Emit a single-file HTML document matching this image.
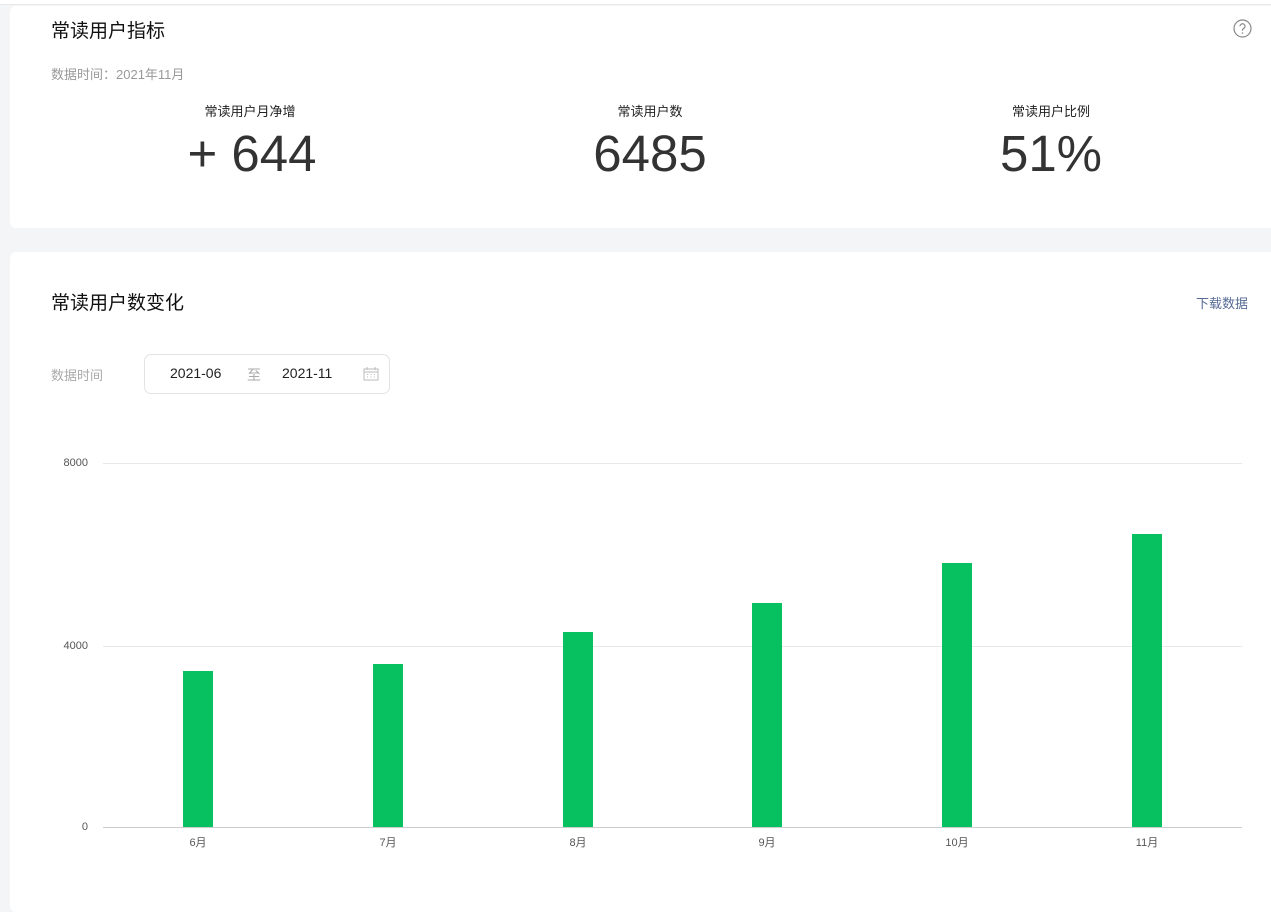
<!DOCTYPE html>
<html><head><meta charset="utf-8"><style>
*{margin:0;padding:0;box-sizing:border-box}
body{width:1271px;height:900px;background:#f4f5f7;font-family:"Liberation Sans","Noto Sans CJK SC",sans-serif;position:relative;overflow:hidden;color:#222}
.top{position:absolute;left:0;top:0;width:1271px;height:5px;background:#fff;border-bottom:1px solid #e8e8e8}
.card{position:absolute;left:10px;width:1280px;background:#fff;border-radius:6px}
.a{position:absolute;white-space:nowrap}
.grid{position:absolute;left:103px;width:1139px;height:1px;background:#e8e8e8}
.bar{position:absolute;width:30px;background:#07c160}
.yl{position:absolute;font-size:11px;color:#555;right:1183px}
.xl{position:absolute;font-size:11px;color:#555;width:60px;text-align:center;top:834px}
</style></head><body>
<div class="top"></div>
<div class="card" style="top:6px;height:222px"></div>
<div class="card" style="top:252px;height:660px"></div>
<div class="a" style="left:51px;top:16px;font-size:19px;color:#111">常读用户指标</div>
<svg class="a" style="left:1233px;top:19px" width="19" height="19" viewBox="0 0 19 19"><circle cx="9.5" cy="9.5" r="8.5" fill="none" stroke="#888" stroke-width="1.2"/><path d="M7 7.3a2.5 2.5 0 1 1 3.4 2.3c-.6.3-.9.7-.9 1.4v.7" fill="none" stroke="#888" stroke-width="1.2"/><circle cx="9.5" cy="14" r=".8" fill="#888"/></svg>
<div class="a" style="left:51px;top:64px;font-size:13px;color:#999">数据时间：2021年11月</div>
<div class="a" style="left:150px;width:200px;text-align:center;top:101px;font-size:13px">常读用户月净增</div>
<div class="a" style="left:152px;width:200px;text-align:center;top:124px;font-size:51px;color:#333">+ 644</div>
<div class="a" style="left:550px;width:200px;text-align:center;top:101px;font-size:13px">常读用户数</div>
<div class="a" style="left:550px;width:200px;text-align:center;top:124px;font-size:51px;color:#333">6485</div>
<div class="a" style="left:951px;width:200px;text-align:center;top:101px;font-size:13px">常读用户比例</div>
<div class="a" style="left:951px;width:200px;text-align:center;top:124px;font-size:51px;color:#333">51%</div>
<div class="a" style="left:51px;top:288px;font-size:19px;color:#111">常读用户数变化</div>
<div class="a" style="left:1196px;top:293px;font-size:13px;color:#576b95">下载数据</div>
<div class="a" style="left:51px;top:365px;font-size:13px;color:#aaa">数据时间</div>
<div class="a" style="left:144px;top:354px;width:246px;height:40px;border:1px solid #e3e3e3;border-radius:7px"></div>
<div class="a" style="left:170px;top:365px;font-size:14px;color:#222">2021-06</div>
<div class="a" style="left:247px;top:365px;font-size:14px;color:#aaa">至</div>
<div class="a" style="left:282px;top:365px;font-size:14px;color:#222">2021-11</div>
<svg class="a" style="left:363px;top:367px" width="16" height="14" viewBox="0 0 16 14"><rect x="1" y="2" width="14" height="11" fill="none" stroke="#bbb"/><path d="M1 5h14M4 0v3M12 0v3" stroke="#bbb"/><path d="M4 7.5h1M7.5 7.5h1M11 7.5h1M4 10h1M7.5 10h1M11 10h1" stroke="#bbb"/></svg>
<div class="grid" style="top:463px"></div>
<div class="grid" style="top:646px"></div>
<div class="grid" style="top:827px;background:#ccc"></div>
<div class="yl" style="top:457px">8000</div>
<div class="yl" style="top:640px">4000</div>
<div class="yl" style="top:821px">0</div>
<div class="bar" style="left:183px;top:671px;height:156px"></div>
<div class="bar" style="left:373px;top:664px;height:163px"></div>
<div class="bar" style="left:563px;top:632px;height:195px"></div>
<div class="bar" style="left:752px;top:603px;height:224px"></div>
<div class="bar" style="left:942px;top:563px;height:264px"></div>
<div class="bar" style="left:1132px;top:534px;height:293px"></div>
<div class="xl" style="left:168px">6月</div>
<div class="xl" style="left:358px">7月</div>
<div class="xl" style="left:548px">8月</div>
<div class="xl" style="left:737px">9月</div>
<div class="xl" style="left:927px">10月</div>
<div class="xl" style="left:1117px">11月</div>
</body></html>
